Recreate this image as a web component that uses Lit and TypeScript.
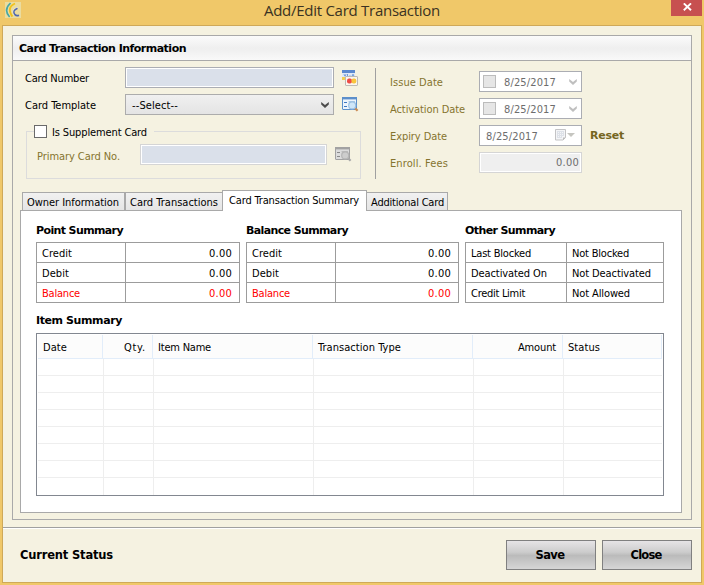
import { LitElement, html, css } from "lit";
import { customElement, property } from "lit/decorators.js";

/** A single line of text whose tracking is adjusted so that it fills a given width. */
@customElement("fit-text")
class FitText extends LitElement {
  @property({ type: Number }) w = 0;
  static styles = css`
    :host { display: inline-block; white-space: pre; }
  `;
  render() {
    return html`<slot></slot>`;
  }
  firstUpdated() {
    const n = (this.textContent || "").length;
    const natural = this.getBoundingClientRect().width;
    if (n && this.w) this.style.letterSpacing = ((this.w - natural) / n).toFixed(3) + "px";
  }
}

const t = (s: string, w: number) => html`<fit-text w=${w}>${s}</fit-text>`;

const chevron = html`<svg class="chev" width="8" height="6" viewBox="0 0 8 6">
  <path d="M0.2 0 L4 3 L7.8 0 V2.6 L4 6 L0.2 2.6 Z" fill="currentColor" />
</svg>`;

const lookupIcon = (c: string[]) => html`<svg width="17" height="16" viewBox="0 0 17 16">
  <rect x="0.5" y="1.5" width="14" height="12" rx="0.5" fill=${c[1]} stroke=${c[0]} />
  <rect x="0" y="1" width="15" height="2.4" fill=${c[0]} />
  <path d="M2 6.5h3M2 10.5h3" stroke=${c[2]} stroke-width="1.2" />
  <path d="M6.5 5.7h6.5" stroke=${c[3]} stroke-width="1" />
  <path d="M12.8 12 L15.6 14.8" stroke=${c[5]} stroke-width="2.2" />
  <circle cx="10.2" cy="9.4" r="3.5" fill=${c[4]} stroke=${c[3]} stroke-width="1.2" />
</svg>`;

const cardsIcon = html`<svg width="17" height="17" viewBox="0 0 17 17">
  <rect x="0" y="1" width="13" height="10" fill="#dfe9f7" />
  <rect x="0" y="1" width="13" height="3" fill="#5b89cf" />
  <path d="M2 5.2l1 2 1-2M5.5 5v2.4M7.2 7h1.4M10 7.2l1-2 1 2" stroke="#6d9ad9" stroke-width="1" fill="none" />
  <rect x="0" y="8" width="4" height="3" fill="#f2cf52" />
  <rect x="3.5" y="7.5" width="12" height="9" rx="0.5" fill="#fbf6ee" stroke="#bdbab5" />
  <rect x="5" y="9.5" width="5" height="5" rx="2" fill="#ee4b45" />
  <rect x="9.5" y="9.5" width="4.8" height="5" rx="2" fill="#f8c63d" />
</svg>`;

const logo = html`<svg width="16" height="16" viewBox="0 0 16 16">
  <rect width="16" height="16" fill="#eadca0" />
  <path d="M5.5 1 Q-1.8 8 4.6 15" fill="none" stroke="#45a6a4" stroke-width="1.6" />
  <path d="M10 1.5 Q1.2 5.5 7.4 14.6" fill="none" stroke="#f1c21b" stroke-width="1.9" />
  <path d="M13 5.2 Q6 7.6 9 12.6" fill="none" stroke="#f0edd8" stroke-width="1.2" />
  <path d="M12.5 6.3 Q6.8 8.7 9.9 12.6 Q11.6 14.3 14 13.2" fill="none" stroke="#5067ae" stroke-width="1.5" />
</svg>`;

const calendar = html`<svg width="12" height="12" viewBox="0 0 12 12">
  <path d="M0.5 0.5h10v8l-2.5 2.5h-7.5z" fill="#f4f5f7" stroke="#c3c3c5" />
  <path d="M2 2.5h7M2 4.5h7M2 6.5h7M2 8.5h5M2.5 2v7M4.5 2v7M6.5 2v7M8.5 2v5" stroke="#dde1e8" stroke-width="1" />
  <path d="M8 11.2V8.6h2.8z" fill="#bcbcbc" />
</svg>`;

type Cell = [string, number];

@customElement("summary-table")
class SummaryTable extends LitElement {
  @property() heading = "";
  @property({ type: Number }) hw = 0;
  @property({ attribute: false }) rows: [Cell, Cell][] = [];
  @property({ type: Boolean, reflect: true }) money = false;
  static styles = css`
    :host { display: block; }
    .heading { height: 24px; line-height: 26px; font: bold 11px/26px "DejaVu Sans", sans-serif; }
    .grid { border: 1px solid #9c9c9c; border-bottom: 0; }
    .row { display: grid; grid-template-columns: var(--label) 1fr; height: 20px; border-bottom: 1px solid #9c9c9c; box-sizing: border-box; line-height: 22px; }
    .label { border-right: 1px solid #9c9c9c; padding-left: 5px; height: 19px; }
    .value { padding-left: 5px; height: 19px; }
    :host([money]) .value { text-align: right; padding: 0 7px 0 0; }
    :host([money]) .row:last-child { color: #f00; }
  `;
  render() {
    return html`<div class="heading">${t(this.heading, this.hw)}</div>
      <div class="grid">
        ${this.rows.map(
          ([a, b]) => html`<div class="row">
            <div class="label">${t(a[0], a[1])}</div>
            <div class="value">${t(b[0], b[1])}</div>
          </div>`
        )}
      </div>`;
  }
}

const money: [Cell, Cell][] = [
  [["Credit", 30], ["0.00", 23]],
  [["Debit", 27], ["0.00", 23]],
  [["Balance", 38], ["0.00", 23]],
];
const other: [Cell, Cell][] = [
  [["Last Blocked", 60], ["Not Blocked", 57]],
  [["Deactivated On", 76], ["Not Deactivated", 79]],
  [["Credit Limit", 54], ["Not Allowed", 58]],
];

const columns: [string, number, string][] = [
  ["Date", 24, ""],
  ["Qty.", 22, "right"],
  ["Item Name", 53, ""],
  ["Transaction Type", 83, ""],
  ["Amount", 38, "right"],
  ["Status", 32, ""],
];

@customElement("app-root")
class AppRoot extends LitElement {
  static styles = css`
    :host {
      display: block; width: 704px; height: 585px; overflow: hidden;
      background: #f0c869; color: #000;
      font: 11px "DejaVu Sans Condensed", "DejaVu Sans", sans-serif;
    }
    * { box-sizing: border-box; }
    svg { display: block; }
    .window { height: 585px; display: grid; grid-template-rows: 25px 558px; padding: 0 2px; }
    .titlebar { display: grid; grid-template-columns: 1fr auto 1fr; }
    .logo { padding: 2px 0 0 3px; }
    .title { font: 15px/21px "Open Sans", "Noto Sans", sans-serif; color: #3a3222; }
    .x { justify-self: end; width: 31px; height: 16px; background: #c75050; display: flex; justify-content: center; padding: 3px 0 0 1px; }
    .client { border: 1px solid #cfa958; background: #f5f2e1; display: grid; grid-template-rows: 501px 1fr; }
    .body { padding: 9px 9px 0; }
    .group { height: 485px; border: 1px solid #a9a9a9; }
    .group-head { height: 25px; border-bottom: 1px solid #a9a9a9; background: linear-gradient(#fbfbfb, #efefef 50%, #f0f0f0 60%, #f9f9f9);
      padding-left: 6px; font: bold 11px/25px "DejaVu Sans", sans-serif; }
    .form { height: 129px; display: grid; grid-template-columns: 362px 1fr; padding-top: 6px; }
    .left { padding-left: 12px; }
    .line { display: grid; grid-template-columns: 100px 209px auto; height: 21px; margin-bottom: 6px; line-height: 23px; }
    .line svg { margin: 2px 0 0 8px; }
    .input { height: 21px; border: 1px solid #abadb3; background: #dae0ea; box-shadow: inset 0 0 0 1px #fff; }
    .select { height: 21px; line-height: 21px; border: 1px solid #acacac; background: linear-gradient(#f0f0f0, #e4e4e4); display: flex; justify-content: space-between; padding: 0 4px 0 6px; }
    .select .chev { color: #4c4c4c; margin: 7px 0 0; }
    .fieldset { margin: 16px 0 0 1px; width: 335px; height: 48px; border: 1px solid #dcdcdc; }
    .legend { display: flex; width: 120px; height: 13px; margin: -7px 0 0 7px; background: #f5f2e1; line-height: 15px; }
    .check { width: 13px; height: 13px; border: 1px solid #6a6a6a; background: #fff; margin-right: 5px; flex: none; }
    .primary { display: grid; grid-template-columns: 103px 187px auto; margin: 6px 0 0 10px; line-height: 25px; color: #85742e; }
    .primary .input { border-color: #d5d5d5; }
    .primary svg { margin: 2px 0 0 8px; }
    .right { border-left: 1px solid #a0a0a0; height: 111px; margin-top: 1px; padding: 3px 0 0 14px; color: #85742e; }
    .drow { display: grid; grid-template-columns: 89px 103px auto; height: 21px; line-height: 24px; margin-bottom: 6px; }
    .date { border: 1px solid #abadb3; background: #fff; color: #6d6d6d; height: 21px; display: flex; line-height: 22px; }
    .date .box { width: 13px; height: 13px; margin: 3px 8px 0 3px; background: #e6e6e6; border: 1px solid #bcbcbc; }
    .date .chev { margin: 7px 0 0 13px; color: #bfbfbf; }
    .date.cal { padding-left: 6px; }
    .date.cal svg { margin: 3px 0 0 17px; }
    .tri { width: 0; height: 0; border: 4px solid transparent; border-top-color: #c5c5c0; border-bottom: 0; margin: 7px 0 0 0; }
    .reset { font: bold 11px/21px "DejaVu Sans", sans-serif; padding-left: 8px; color: #75661f; }
    .fees { border: 1px solid #d5d5d5; background: #efefef; box-shadow: inset 0 0 0 1px #fff; height: 21px; line-height: 20px; text-align: right; padding-right: 2px; color: #6d6d6d; }
    .tabs { display: flex; align-items: flex-end; height: 21px; margin: 0 0 -1px 9px; position: relative; }
    .tab { height: 19px; border: 1px solid #a9a9a9; background: linear-gradient(#f1f1f1, #e5e5e5); line-height: 19px; padding-left: 4px; }
    .t1 { width: 103px; }
    .t2 { width: 98px; }
    .t4 { width: 82px; }
    .active { width: 145px; height: 21px; margin: 0 -1px; background: #fff; border-bottom: 0; padding-left: 6px; line-height: 19px; z-index: 1; }
    .page { width: 662px; height: 303px; margin-left: 7px; border: 1px solid #a9a9a9; background: #fff; padding: 7px 15px 0; }
    .summaries { display: grid; grid-template-columns: 204px 213px 199px; column-gap: 6px; height: 85px; }
    .s { --label: 89px; }
    .s3 { --label: 101px; }
    .item-head { font: bold 11px/35px "DejaVu Sans", sans-serif; height: 30px; }
    .list { width: 628px; height: 163px; border: 1px solid #828790; padding: 1px 1px 0; background: #fff; }
    .cols { display: grid; grid-template-columns: 65px 50px 160px 160px 90px 99px; }
    .head { height: 24px; background: #fcfcfc; border-bottom: 1px solid #e2edfa; line-height: 26px; width: 624px; }
    .head > div { height: 23px; border-right: 1px solid #e2edfa; padding: 0 6px 0 5px; white-space: nowrap; }
    .head .right-al { text-align: right; }
    .rows { width: 624px; overflow: hidden; }
    .r { grid-template-columns: 66px 50px 160px 160px 90px 98px; height: 17px; border-bottom: 1px solid #eee; }
    .r > div { border-right: 1px solid #eee; }
    .r > div:last-child { border-right: 0; }
    .r:last-child { border-bottom: 0; }
    .footer { border-top: 1px solid #a0a0a0; box-shadow: inset 0 1px 0 #fff; display: flex; padding: 12px 9px 0 17px; gap: 6px; font: bold 11.5px "DejaVu Sans", sans-serif; }
    .status { flex: 1; line-height: 31px; }
    .btn { width: 90px; height: 30px; border: 1px solid #808080; background: linear-gradient(#e6e4e6, #cccccc 40%, #bbbbbb 52%, #d6d6d6); text-align: center; line-height: 28px; padding-right: 2px; }
  `;

  private checkedDate(label: string, w: number) {
    return html`<div class="drow"><span>${t(label, w)}</span>
      <div class="date"><i class="box"></i>${t("8/25/2017", 52)}${chevron}</div></div>`;
  }

  render() {
    return html`<div class="window">
      <div class="titlebar">
        <div class="logo">${logo}</div>
        <div class="title">${t("Add/Edit Card Transaction", 176)}</div>
        <div class="x"><svg width="9" height="8" viewBox="0 0 9 8"><path d="M0.8 0.4L8 7.2M8 0.4L0.8 7.2" stroke="#fff" stroke-width="1.9" /></svg></div>
      </div>
      <div class="client">
        <div class="body">
          <div class="group">
            <div class="group-head">${t("Card Transaction Information", 167)}</div>
            <div class="form">
              <div class="left">
                <div class="line"><span>${t("Card Number", 64)}</span><div class="input"></div>${cardsIcon}</div>
                <div class="line"><span>${t("Card Template", 71)}</span>
                  <div class="select">${t("--Select--", 46)}${chevron}</div>
                  ${lookupIcon(["#5c8fca", "#edf4fc", "#3e78c0", "#9cc0e2", "#cfe6f8", "#c98a52"])}</div>
                <div class="fieldset">
                  <div class="legend"><i class="check"></i>${t("Is Supplement Card", 95)}</div>
                  <div class="primary"><span>${t("Primary Card No.", 83)}</span><div class="input"></div>
                    ${lookupIcon(["#a2a2a2", "#dcdcdc", "#8a8a8a", "#b5b5b5", "#cdcdcd", "#a8a8a8"])}</div>
                </div>
              </div>
              <div class="right">
                ${this.checkedDate("Issue Date", 53)}
                ${this.checkedDate("Activation Date", 75)}
                <div class="drow"><span>${t("Expiry Date", 57)}</span>
                  <div class="date cal">${t("8/25/2017", 52)}${calendar}<i class="tri"></i></div>
                  <span class="reset">${t("Reset", 34)}</span></div>
                <div class="drow"><span>${t("Enroll. Fees", 58)}</span><div class="fees">${t("0.00", 23)}</div></div>
              </div>
            </div>
            <div class="tabs">
              <div class="tab t1">${t("Owner Information", 92)}</div>
              <div class="tab t2">${t("Card Transactions", 88)}</div>
              <div class="tab active">${t("Card Transaction Summary", 130)}</div>
              <div class="tab t4">${t("Additional Card", 73)}</div>
            </div>
            <div class="page">
              <div class="summaries">
                <summary-table class="s" money heading="Point Summary" hw="87" .rows=${money}></summary-table>
                <summary-table class="s" money heading="Balance Summary" hw="102" .rows=${money}></summary-table>
                <summary-table class="s3" heading="Other Summary" hw="90" .rows=${other}></summary-table>
              </div>
              <div class="item-head">${t("Item Summary", 86)}</div>
              <div class="list">
                <div class="cols head">
                  ${columns.map(([n, w, a]) => html`<div class=${a ? "right-al" : ""}>${t(n, w)}</div>`)}
                </div>
                <div class="rows">
                  ${Array.from({ length: 8 }, () => html`<div class="cols r">${columns.map(() => html`<div></div>`)}</div>`)}
                </div>
              </div>
            </div>
          </div>
        </div>
        <div class="footer">
          <div class="status">${t("Current Status", 93)}</div>
          <div class="btn">${t("Save", 29)}</div>
          <div class="btn">${t("Close", 31)}</div>
        </div>
      </div>
    </div>`;
  }
}
